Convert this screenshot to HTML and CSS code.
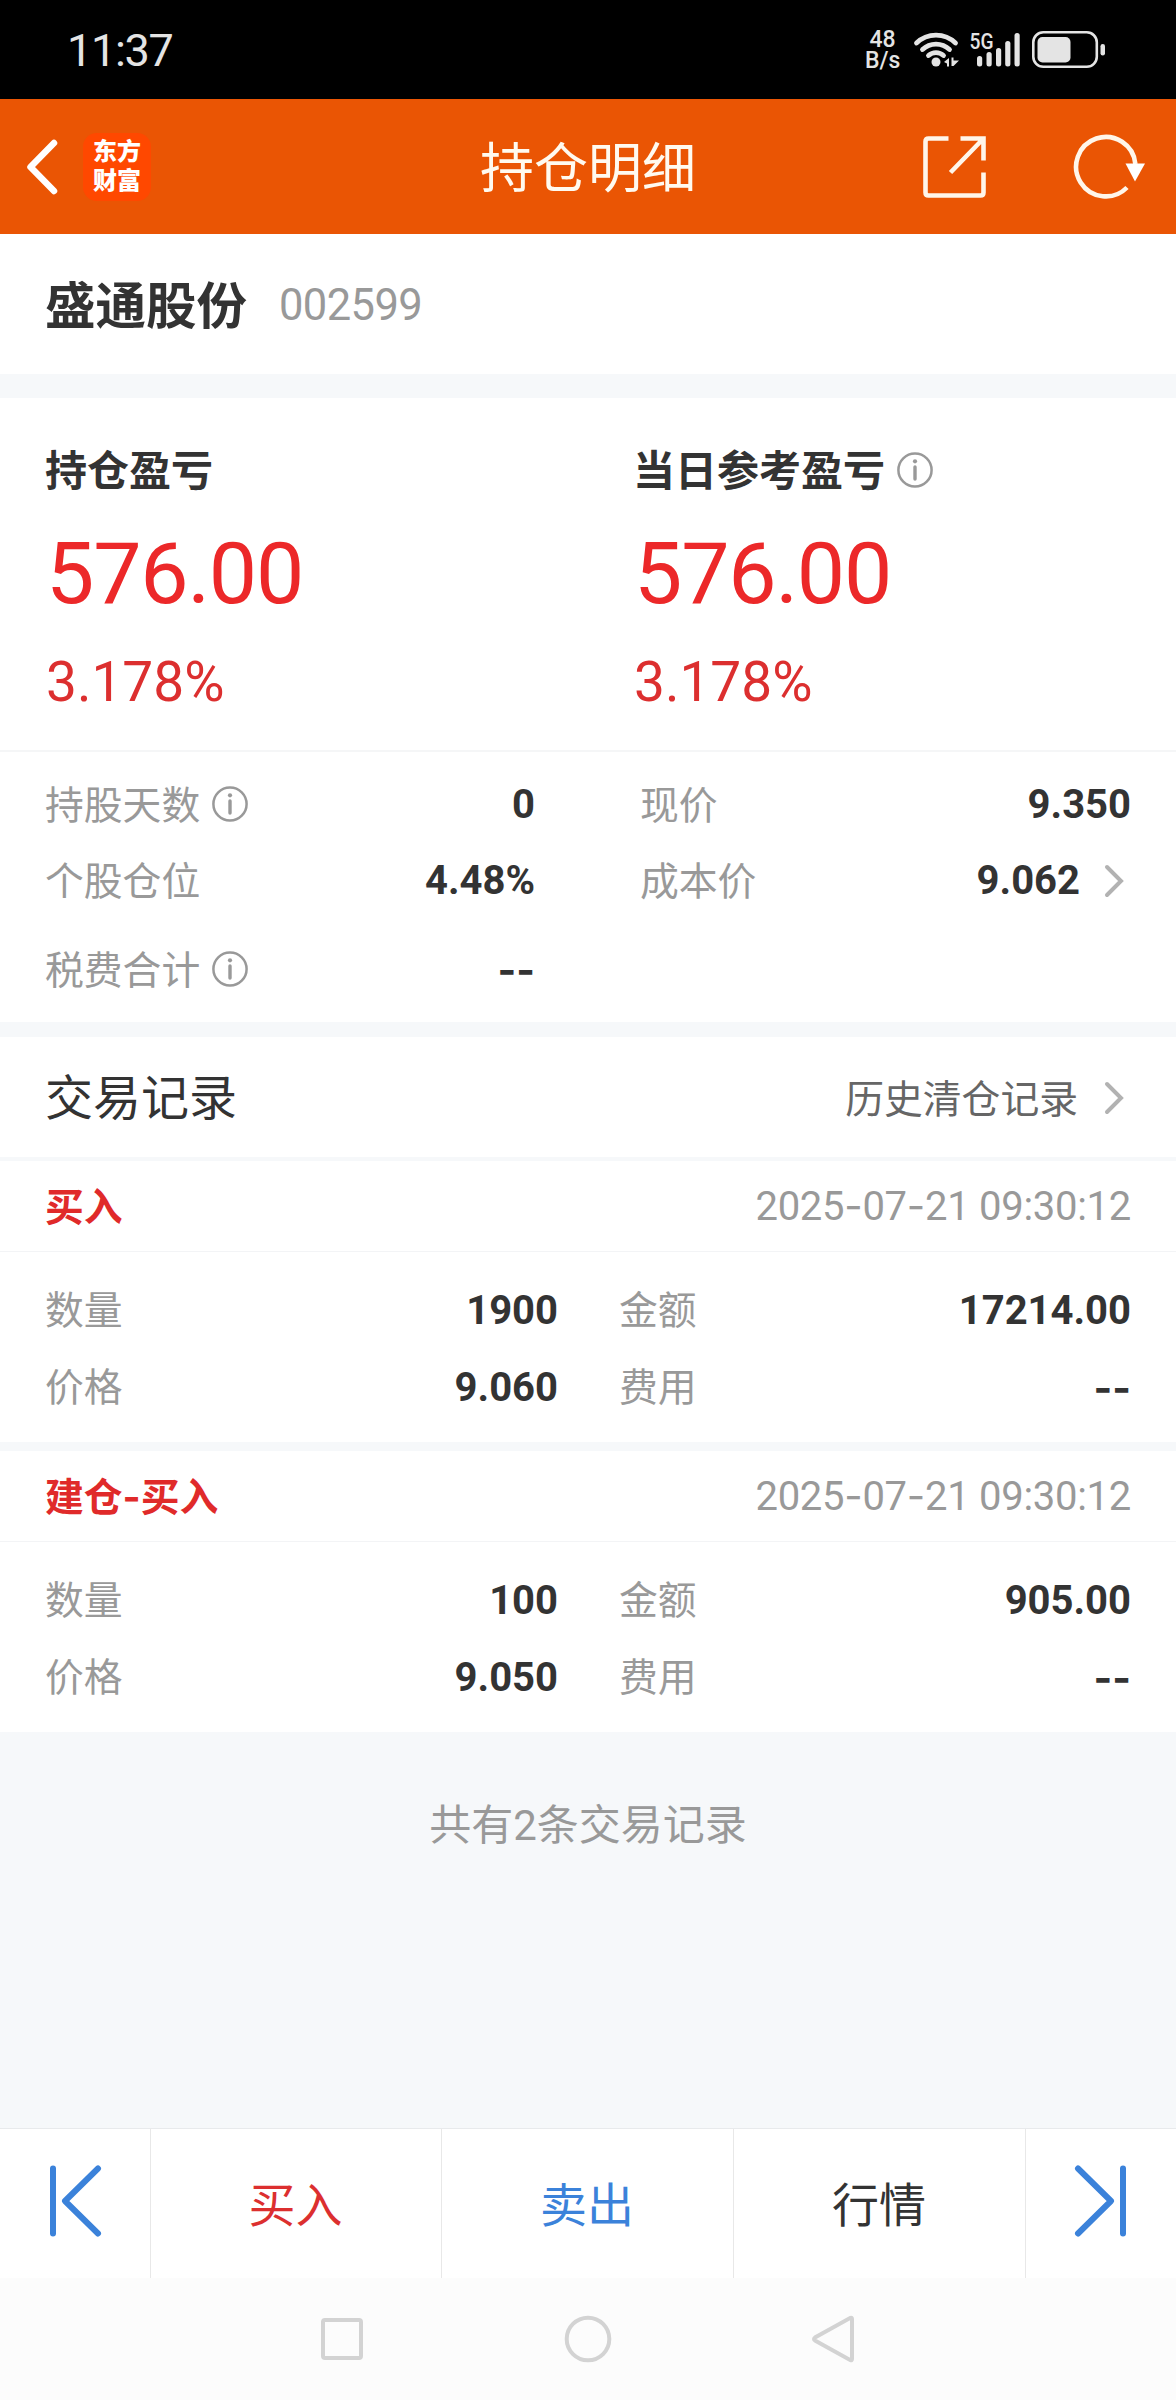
FILE: index.html
```html
<!DOCTYPE html>
<html lang="zh-CN">
<head>
<meta charset="utf-8">
<title>持仓明细</title>
<link rel="stylesheet" href="styles.css">
</head>
<body>
<svg class="defs" width="0" height="0" aria-hidden="true">
  <symbol id="info" viewBox="0 0 36 36">
    <circle cx="18" cy="18" r="16.6" fill="none" stroke="#999" stroke-width="2.5"/>
    <circle cx="18" cy="9.3" r="2.1" fill="#999"/>
    <path d="M18 15v12" stroke="#999" stroke-width="3.4" stroke-linecap="round"/>
  </symbol>
  <symbol id="chev" viewBox="0 0 20 34">
    <path d="M3 3l14 14L3 31" fill="none" stroke="#b2b2b2" stroke-width="4" stroke-linecap="round"/>
  </symbol>
</svg>
<div class="phone">
  <div class="status">
    <span class="clock">11:37</span>
    <span class="speed">48<br>B/s</span>
    <svg class="signals" width="194" height="40" viewBox="912 29 194 40">
      <g fill="none" stroke="#e4e4e4" stroke-width="4.8" stroke-linecap="round">
        <path d="M916.5 43a28 28 0 0 1 39 0"/>
        <path d="M922.5 49.500a19.500 19.500 0 0 1 27 0"/>
        <path d="M928.500 55.500a11 11 0 0 1 15 0"/>
      </g>
      <g fill="#e4e4e4">
        <circle cx="936" cy="62" r="4.500"/>
        <path d="M944 62l5-4v8.500h-2v-3zM951.500 57.500l2 0v3h5.500l-5.500 5.500h-2z"/>
        <rect x="977" y="56" width="5.200" height="10.500" rx="2.500"/>
        <rect x="986.500" y="52" width="5.200" height="14.500" rx="2.500"/>
        <rect x="996" y="48" width="5.200" height="18.500" rx="2.500"/>
        <rect x="1005.200" y="41" width="5.200" height="25.500" rx="2.500"/>
        <rect x="1014.500" y="33" width="5.200" height="33.500" rx="2.500"/>
        <rect x="1037.500" y="37" width="33" height="25.500" rx="5"/>
        <rect x="1100.500" y="44" width="4.500" height="11.500" rx="2.200"/>
        <text class="net" x="969.500" y="49" textLength="24" lengthAdjust="spacingAndGlyphs">5G</text>
      </g>
      <rect x="1033.300" y="32.300" width="63.500" height="34.500" rx="10" fill="none" stroke="#e4e4e4" stroke-width="2.600"/>
    </svg>
  </div>

  <header class="bar">
    <div class="side">
      <svg class="back" width="34" height="58" viewBox="0 0 34 58"><path d="M29 5L5.500 29 29 53" fill="none" stroke="#fff" stroke-width="6.500" stroke-linecap="round" stroke-linejoin="round"/></svg>
      <div class="logo">东方<br>财富</div>
    </div>
    <h1>持仓明细</h1>
    <div class="side tools">
      <svg width="66" height="66" viewBox="0 0 66 66" fill="none" stroke="#fff6ea" stroke-width="4.600"><path d="M27.500 4.500H7.500q-3 0-3 3V58.500q0 3 3 3H59.500q3 0 3-3V38.500M39.500 4.500H62.500V26.500M62 5L29.500 38.500"/></svg>
      <svg width="76" height="68" viewBox="0 0 76 68"><path d="M56 54.500A29.700 29.700 0 1 1 64.400 31" fill="none" stroke="#fff6ea" stroke-width="4.600"/><path d="M54.500 30.500H74L64 48.500z" fill="#fff"/></svg>
    </div>
  </header>

  <section class="stock"><strong>盛通股份</strong><span>002599</span></section>

  <section class="profit">
    <div class="pcol">
      <h2>持仓盈亏</h2>
      <p class="amount">576.00</p>
      <p class="rate">3.178%</p>
    </div>
    <div class="pcol">
      <h2>当日参考盈亏<svg class="info"><use href="#info"/></svg></h2>
      <p class="amount">576.00</p>
      <p class="rate">3.178%</p>
    </div>
  </section>

  <section class="facts">
    <dl>
      <div><dt>持股天数<svg class="info"><use href="#info"/></svg></dt><dd>0</dd></div>
      <div><dt>个股仓位</dt><dd>4.48%</dd></div>
      <div class="tax"><dt>税费合计<svg class="info"><use href="#info"/></svg></dt><dd class="none">--</dd></div>
    </dl>
    <dl>
      <div><dt>现价</dt><dd>9.350</dd></div>
      <div><dt>成本价</dt><dd>9.062<svg class="chev"><use href="#chev"/></svg></dd></div>
    </dl>
  </section>

  <section class="records-title">
    <h3>交易记录</h3>
    <a>历史清仓记录<svg class="chev"><use href="#chev"/></svg></a>
  </section>

  <article class="record">
    <header><b>买入</b><time>2025<i>-</i>07<i>-</i>21 09:30:12</time></header>
    <div class="grid">
      <span>数量</span><em>1900</em><span>金额</span><em>17214.00</em>
      <span>价格</span><em>9.060</em><span>费用</span><em class="none">--</em>
    </div>
  </article>
  <article class="record">
    <header><b>建仓<i>-</i>买入</b><time>2025<i>-</i>07<i>-</i>21 09:30:12</time></header>
    <div class="grid">
      <span>数量</span><em>100</em><span>金额</span><em>905.00</em>
      <span>价格</span><em>9.050</em><span>费用</span><em class="none">--</em>
    </div>
  </article>

  <p class="total">共有2条交易记录</p>

  <nav class="actions">
    <a><svg width="54" height="76" viewBox="0 0 54 76" fill="none" stroke="#3b82da" stroke-width="6" stroke-linecap="round" stroke-linejoin="round"><path d="M5 5.500V70.500M50 5.500L17 38 50 70.500"/></svg></a>
    <a class="buy">买入</a>
    <a class="sell">卖出</a>
    <a>行情</a>
    <a><svg width="54" height="76" viewBox="0 0 54 76" fill="none" stroke="#3b82da" stroke-width="6" stroke-linecap="round" stroke-linejoin="round"><path d="M49 5.500V70.500M4 5.500L37 38 4 70.500"/></svg></a>
  </nav>

  <div class="system">
    <svg width="48" height="48" viewBox="0 0 48 48"><rect x="5" y="5" width="38" height="38" rx="2"/></svg>
    <svg width="48" height="48" viewBox="0 0 48 48"><circle cx="24" cy="24" r="21.300"/></svg>
    <svg width="48" height="48" viewBox="0 0 48 48"><path d="M40.500 2.800Q42 2.300 42 4V44Q42 45.700 40.500 45.200L5 25.500Q3 24 5 22.500z"/></svg>
  </div>
</div>
</body>
</html>
```
FILE: styles.css
```css
* { box-sizing: border-box; margin: 0; padding: 0; }
body { background: #f6f8fa; color: #333; font-family: Roboto, "Noto Sans CJK SC", sans-serif; }
svg { display: block; flex: none; }
.defs { position: absolute; }
i { font-style: normal; font-family: Inter, sans-serif; }
.phone { width: 1176px; height: 2400px; display: flex; flex-direction: column; overflow: hidden; }
.phone > * { flex: none; }

.status { height: 99px; background: #000; color: #e4e4e4; display: flex; align-items: flex-start; padding: 0 70px 0 67px; }
.clock { font-size: 45px; line-height: 50px; margin-top: 26px; letter-spacing: -1.3px; }
.speed { margin: 29px 12px 0 auto; width: 35px; font-size: 23px; line-height: 21px; font-weight: 500; text-align: center; }
.signals { margin-top: 29px; }
.net { font: 500 22px Roboto, sans-serif; }

.bar { height: 135px; background: #ea5504; display: grid; grid-template-columns: 400px 1fr 400px; align-items: center; }
.bar h1 { color: #fffaf0; font-size: 54px; line-height: 60px; font-weight: 400; text-align: center; padding-top: 7px; }
.side { display: flex; align-items: center; padding-left: 25px; }
.logo { margin-left: 24px; width: 68px; height: 68px; border-radius: 14px; background: #ff4800; color: #fff; font-size: 24px; line-height: 29px; font-weight: 900; text-align: center; padding-top: 5px; }
.tools { justify-content: flex-end; gap: 84px; padding: 0 29px 0 0; }

.stock { height: 140px; background: #fff; padding: 0 45px; display: flex; align-items: center; gap: 32px; margin-bottom: 24px; }
.stock strong { font-size: 50.5px; line-height: 60px; padding-top: 5px; }
.stock span { font-size: 43.5px; line-height: 60px; padding-top: 3px; color: #999; letter-spacing: -0.6px; }

.profit { height: 354px; background: #fff; border-bottom: 2px solid #f5f6f7; display: grid; grid-template-columns: 588px 588px; padding-top: 49px; }
.pcol { padding-left: 46px; }
.pcol h2 { display: flex; align-items: center; font-size: 42px; line-height: 54px; height: 50px; margin-left: -1px; }
.info { width: 36px; height: 36px; margin-left: 12px; }
.pcol .info { margin-top: -4px; }
.amount { color: #ec2829; font-size: 86px; line-height: 100px; margin-top: 27px; letter-spacing: -1.2px; }
.rate { color: #dc2f2f; font-size: 55px; line-height: 60px; margin-top: 28px; }

.facts { height: 270px; background: #fff; display: grid; grid-template-columns: 490px 491px; column-gap: 105px; padding: 28px 0 0 45px; margin-bottom: 15px; }
.facts dl > div { display: flex; justify-content: space-between; align-items: center; height: 50px; line-height: 50px; margin-bottom: 26px; }
.facts .tax { margin-top: 39px; }
dt { display: flex; align-items: center; color: #999; font-size: 38.8px; line-height: 53px; }
dt .info { margin-top: -2px; }
dd { display: flex; align-items: center; font-size: 40px; font-weight: 700; line-height: 52px; }
.none { font-family: Inter, sans-serif; }
.chev { width: 20px; height: 34px; margin: 0 7px 0 24px; }

.records-title { height: 124px; background: #fff; border-bottom: 4px solid #f6f8fa; padding: 0 45px; display: flex; align-items: center; justify-content: space-between; }
.records-title h3 { font-size: 48px; font-weight: 400; line-height: 60px; padding-top: 3px; }
.records-title a { display: flex; align-items: center; color: #666; font-size: 38.8px; line-height: 54px; margin-top: 6px; }
.records-title .chev { margin: -4px 7px 0 26px; }

.record { height: 281px; background: #fff; margin-bottom: 9px; }
.record header { height: 91px; border-bottom: 1px solid #f3f4f6; padding: 0 45px; display: flex; align-items: center; justify-content: space-between; line-height: 50px; }
.record b { color: #e02a2a; font-size: 38.8px; padding-top: 3px; }
.record time { color: #999; font-size: 40px; letter-spacing: -0.28px; padding-top: 1px; }
.grid { display: grid; grid-template-columns: 150px 363px 212px 361px; grid-auto-rows: 50px; row-gap: 27px; line-height: 52px; padding: 33px 0 0 45px; }
.grid span { color: #999; font-size: 38.8px; }
.grid span:nth-of-type(even) { padding-left: 61px; }
.grid em { font-style: normal; font-weight: 700; font-size: 40px; text-align: right; }

.total { flex: 1 0 auto !important; font-size: 42px; line-height: 60px; text-align: center; color: #999; padding-top: 55px; }

.actions { height: 150px; background: #fff; border-top: 1px solid #e8eaec; display: grid; grid-template-columns: 151px 291px 292px 292px 150px; font-size: 47px; }
.actions a { display: flex; align-items: center; justify-content: center; border-right: 1px solid #e8e8e8; padding: 0 1px 5px 0; }
.actions a:last-child { border-right: 0; }
.buy { color: #dc2f2f; }
.sell { color: #3b82da; }

.system { height: 122px; background: #fcfcfc; display: flex; justify-content: center; align-items: center; gap: 198px; }
.system svg { fill: none; stroke: #d3d3d3; stroke-width: 4; }
```
